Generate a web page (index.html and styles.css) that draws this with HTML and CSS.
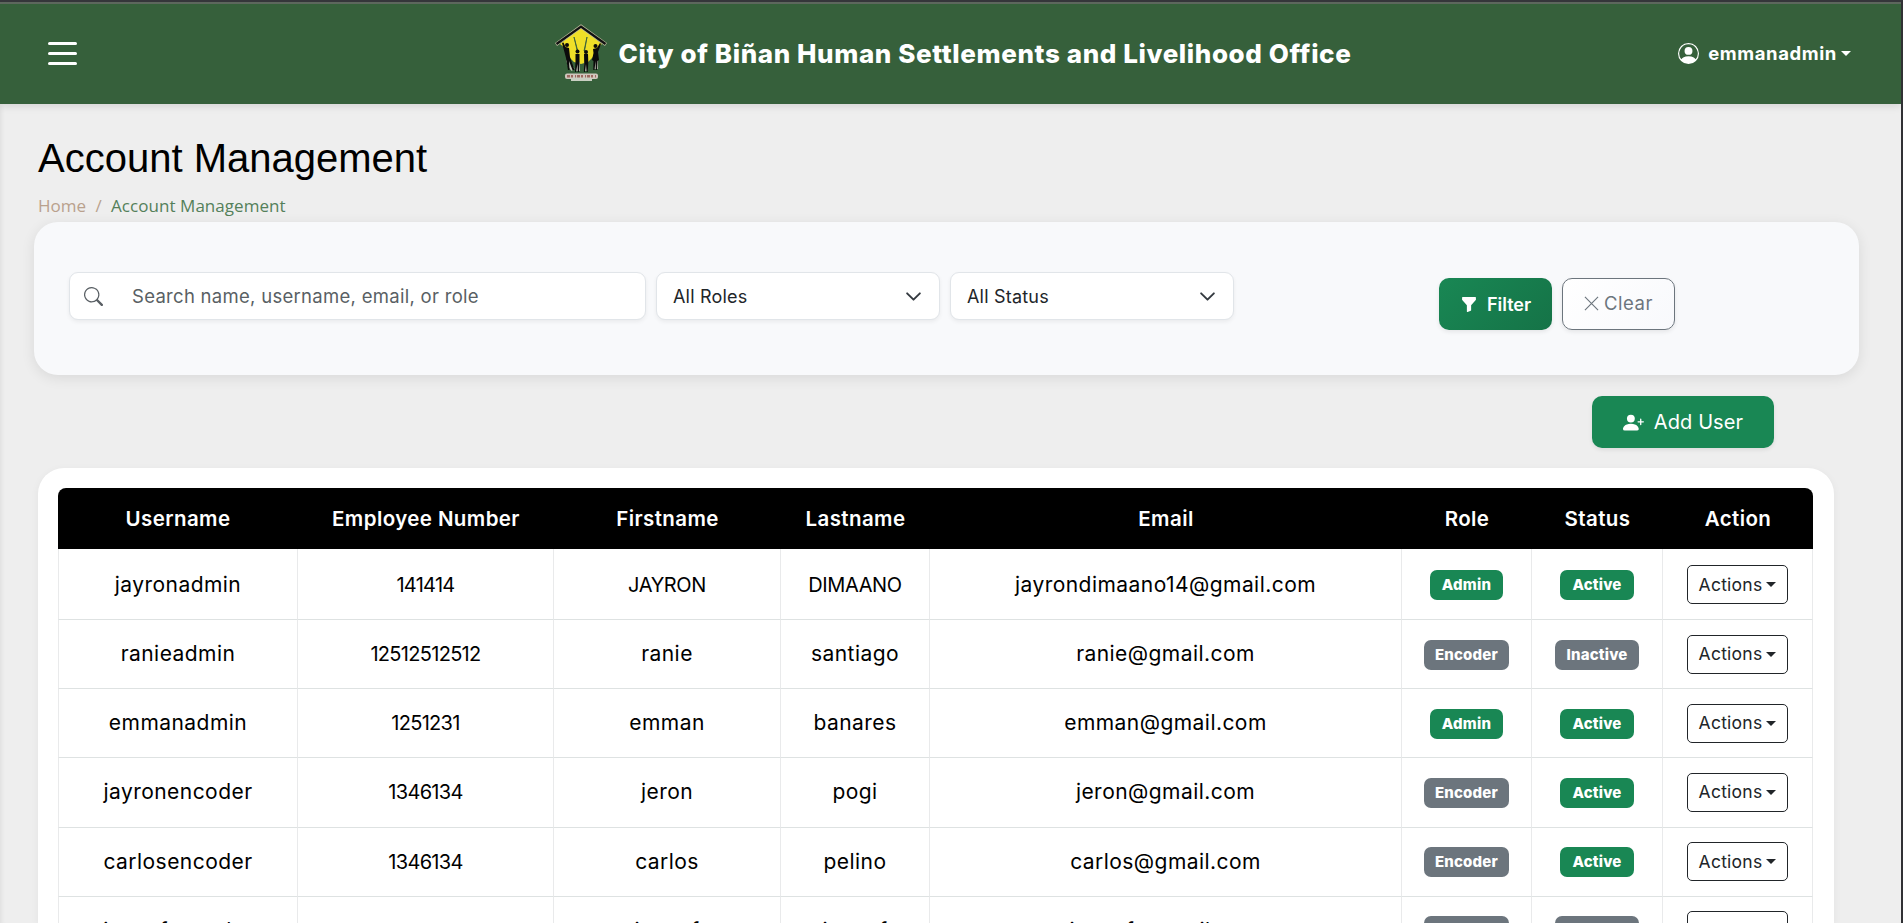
FILE: index.html
```html
<!DOCTYPE html>
<html lang="en">
<head>
<meta charset="utf-8">
<title>Account Management</title>
<link rel="stylesheet" href="styles.css">
</head>
<body>
<header class="topbar">
  <button class="menu" aria-label="Menu"><span></span><span></span><span></span></button>
  <div class="brand">
    <svg class="logo" viewBox="0 0 52 58">
      <path d="M26 3 5 20 10 24 14 33 19 38 26 40 33 38 38 33 42 24 47 20Z" fill="#efdf28"/>
      <path d="M19 13 22 26 22.500 26ZM32 13 29 27 29.500 27Z" fill="#36603b" stroke="#36603b" stroke-width=".8"/>
      <path d="M1 20.500 26 2.500 51 20.500" fill="none" stroke="#b9b79a" stroke-width="3.600"/>
      <path d="M1.500 20 26 2.500 50.500 20" fill="none" stroke="#111" stroke-width="2.200"/>
      <g fill="none" stroke="#c3c7b8" stroke-width="3.800" stroke-linejoin="round">
        <path d="M13 36 14.500 41 18 46M23 38V47M31 38V47M41 36V45"/>
      </g>
      <g fill="#0b0b0b">
        <path d="M7 19 8.500 18.500 10.500 23 14 24 15 33 19.500 46 17.500 46 14 37 14.500 46 13 46 11 34Z"/>
        <path d="M20.500 30 24.500 30 24.500 38 24 48 22.800 48 22.500 40 21 48 20 48 20.500 38Z"/>
        <path d="M29 30 33 30 33.300 38 32.800 48 31.600 48 31 40 30 48 28.900 48 29.200 38Z"/>
        <path d="M38 25 42 24 45 19 46 20 43 28 44 36 42.500 37 42 46 40.800 46 40.500 37 39.500 46 38.300 46 38.500 37 37 36 38.500 29Z"/>
        <circle cx="12" cy="21" r="2"/><circle cx="22.500" cy="27.500" r="2"/><circle cx="31" cy="28" r="2"/><circle cx="40.500" cy="22" r="2"/>
      </g>
      <rect x="10" y="49.500" width="33" height="5.500" rx="2" fill="#cfc6bd"/><rect x="16" y="53.500" width="21" height="3.500" fill="#c9cfc2"/>
      <path d="M12 52.300H41" stroke="#9b6a60" stroke-width="2.600" stroke-dasharray="3 1 2 2 1 1"/>
    </svg>
    <span class="brand-name">City of Biñan Human Settlements and Livelihood Office</span>
  </div>
  <div class="user">
    <svg class="user-icon" viewBox="0 0 16 16" fill="currentColor"><path d="M11 6a3 3 0 1 1-6 0 3 3 0 0 1 6 0"/><path fill-rule="evenodd" d="M0 8a8 8 0 1 1 16 0A8 8 0 0 1 0 8m8-7a7 7 0 0 0-5.468 11.370C3.242 11.226 4.805 10 8 10s4.757 1.225 5.468 2.370A7 7 0 0 0 8 1"/></svg>
    <span class="user-name">emmanadmin</span><i class="caret"></i>
  </div>
</header>
<main class="page">
  <h1>Account Management</h1>
  <nav class="crumbs"><a>Home</a><span class="sep">/</span><span class="current">Account Management</span></nav>
  <section class="filters">
    <div class="search">
      <svg viewBox="0 0 16 16" fill="currentColor"><path d="M11.742 10.344a6.500 6.500 0 1 0-1.397 1.398h-.001q.044.060.098.115l3.850 3.850a1 1 0 0 0 1.415-1.414l-3.850-3.850a1 1 0 0 0-.115-.1zM12 6.500a5.500 5.500 0 1 1-11 0 5.500 5.500 0 0 1 11 0"/></svg>
      <span>Search name, username, email, or role</span>
    </div>
    <div class="select"><span>All Roles</span><svg viewBox="0 0 16 16"><path d="m2 5 6 6 6-6"/></svg></div>
    <div class="select"><span>All Status</span><svg viewBox="0 0 16 16"><path d="m2 5 6 6 6-6"/></svg></div>
    <div class="buttons">
      <button class="btn filter"><svg viewBox="0 0 16 16" fill="currentColor"><path d="M1.500 1.500A.5.500 0 0 1 2 1h12a.5.500 0 0 1 .5.500v2a.5.500 0 0 1-.128.334L10 8.692V13.500a.5.500 0 0 1-.342.474l-3 1A.5.500 0 0 1 6 14.500V8.692L1.628 3.834A.5.500 0 0 1 1.500 3.500z"/></svg><span>Filter</span></button>
      <button class="btn clear"><svg viewBox="0 0 16 16"><path d="M1 1 15 15M15 1 1 15"/></svg><span>Clear</span></button>
    </div>
  </section>
  <div class="add-row">
    <button class="btn add"><svg viewBox="0 0 16 16" fill="currentColor"><path d="M1 14s-1 0-1-1 1-4 6-4 6 3 6 4-1 1-1 1zm5-6a3 3 0 1 0 0-6 3 3 0 0 0 0 6"/><path fill-rule="evenodd" d="M13.500 5a.5.500 0 0 1 .5.500V7h1.500a.5.500 0 0 1 0 1H14v1.500a.5.500 0 0 1-1 0V8h-1.500a.5.500 0 0 1 0-1H13V5.500a.5.500 0 0 1 .5-.5"/></svg><span>Add User</span></button>
  </div>
  <section class="table-card">
    <table>
      <colgroup><col class="c1"><col class="c2"><col class="c3"><col class="c4"><col class="c5"><col class="c6"><col class="c7"><col class="c8"></colgroup>
      <thead><tr><th>Username</th><th>Employee Number</th><th>Firstname</th><th>Lastname</th><th>Email</th><th>Role</th><th>Status</th><th>Action</th></tr></thead>
      <tbody>
        <tr><td>jayronadmin</td><td class="num">141414</td><td class="caps">JAYRON</td><td class="caps">DIMAANO</td><td>jayrondimaano14@gmail.com</td><td><span class="badge green">Admin</span></td><td><span class="badge green">Active</span></td><td><button class="actions">Actions<i class="caret"></i></button></td></tr>
        <tr><td>ranieadmin</td><td class="num">12512512512</td><td>ranie</td><td>santiago</td><td>ranie@gmail.com</td><td><span class="badge">Encoder</span></td><td><span class="badge">Inactive</span></td><td><button class="actions">Actions<i class="caret"></i></button></td></tr>
        <tr><td>emmanadmin</td><td class="num">1251231</td><td>emman</td><td>banares</td><td>emman@gmail.com</td><td><span class="badge green">Admin</span></td><td><span class="badge green">Active</span></td><td><button class="actions">Actions<i class="caret"></i></button></td></tr>
        <tr><td>jayronencoder</td><td class="num">1346134</td><td>jeron</td><td>pogi</td><td>jeron@gmail.com</td><td><span class="badge">Encoder</span></td><td><span class="badge green">Active</span></td><td><button class="actions">Actions<i class="caret"></i></button></td></tr>
        <tr><td>carlosencoder</td><td class="num">1346134</td><td>carlos</td><td>pelino</td><td>carlos@gmail.com</td><td><span class="badge">Encoder</span></td><td><span class="badge green">Active</span></td><td><button class="actions">Actions<i class="caret"></i></button></td></tr>
        <tr><td>juanofencoder</td><td class="num">341133</td><td>juanof</td><td>juanof</td><td>juanof@gmail.com</td><td><span class="badge">Encoder</span></td><td><span class="badge">Inactive</span></td><td><button class="actions">Actions<i class="caret"></i></button></td></tr>
      </tbody>
    </table>
  </section>
</main>
</body>
</html>
```
FILE: styles.css
```css
* { box-sizing: border-box; }
html { height: 100%; overflow: hidden; }
body {
  margin: 0; height: 923px; overflow: hidden; background: #eee; color: #000;
  font-family: Inter, "Open Sans", sans-serif;
  border-top: 2px solid #35363a; border-right: 2px solid #303134;
}
button { font: inherit; }
svg { display: block; flex: none; }
.topbar {
  position: relative; z-index: 1; height: 102px; padding: 0 50px 2px 48px; color: #fff;
  display: flex; align-items: center; justify-content: space-between;
  background: #36603b; border-top: 2px solid #5d675d;
  box-shadow: 0 2px 8px rgba(0,0,0,.12);
}
.menu { width: 29px; padding: 0; border: 0; background: none; display: grid; gap: 7px; }
.menu span { height: 3px; border-radius: 2px; background: #fff; }
.brand { display: flex; align-items: center; gap: 12px; margin-left: 150px; }
.logo { width: 52px; height: 58px; }
.brand-name { font-size: 26px; font-weight: 800; width: 732px; white-space: nowrap; letter-spacing: .6px; }
.user { display: flex; align-items: center; }
.user-icon { width: 21px; height: 21px; margin-right: 9px; }
.user-name { font-size: 18.5px; font-weight: 700; letter-spacing: .6px; }
.caret { display: inline-block; border: 5px solid transparent; border-top-color: currentColor; border-bottom: 0; margin-left: 4px; }
.page { display: flex; flex-direction: column; overflow: hidden; padding: 30px 40px 0 34px; box-shadow: inset 5px 0 5px -4px rgba(0,0,0,.08); height: 819px; }
h1 { flex: none; margin: 0 0 0 4px; font: 400 40px/48px "Liberation Sans", sans-serif; }
.crumbs { flex: none; margin: 10px 0 2px 4px; height: 28px; display: flex; align-items: center; font: 500 17px/28px "Open Sans", sans-serif; color: #b9a18d; }
.sep { width: 25px; text-align: center; }
.current { color: #54805a; letter-spacing: .05px; }
.filters {
  flex: none; height: 153px; margin-right: 2px; padding: 50px 35px 0; border-radius: 24px; background: #f8f9fb;
  display: flex; gap: 10px; box-shadow: 0 3px 14px rgba(0,0,0,.09);
}
.search, .select { height: 48px; background: #fff; border: 1px solid #e1e5e9; border-radius: 9px; display: flex; align-items: center; box-shadow: 0 2px 4px rgba(0,0,0,.06); }
.search { width: 577px; padding-left: 14px; color: #595f64; font-size: 18.5px; letter-spacing: .29px; }
.search svg { width: 19px; height: 19px; margin-right: 29px; }
.select { width: 284px; padding: 0 17px 0 16px; justify-content: space-between; color: #212529; font-size: 18px; letter-spacing: .2px; }
.select span { padding-top: 1px; }
.select svg { width: 17px; height: 17px; }
.select path { fill: none; stroke: #343a40; stroke-width: 1.800; stroke-linecap: round; stroke-linejoin: round; }
.buttons { margin: 6px 0 0 195px; display: flex; gap: 10px; }
.btn { height: 52px; padding: 0; border: 0; border-radius: 10px; color: #fff; display: flex; align-items: center; justify-content: center; box-shadow: 0 2px 4px rgba(0,0,0,.08); }
.filter { width: 113px; gap: 9px; background: linear-gradient(135deg, #198754, #157347); font-size: 18px; font-weight: 600; }
.filter svg { width: 18px; height: 17px; }
.clear { width: 113px; gap: 5px; padding-bottom: 2px; border: 1px solid #6c757d; background: linear-gradient(135deg, #fff, #f8f9fc); color: #6c757d; font-size: 18.5px; letter-spacing: .5px; }
.clear svg { width: 15px; height: 15px; }
.clear path { stroke: currentColor; stroke-width: 1.2; }
.add-row { flex: none; display: flex; justify-content: flex-end; padding: 21px 87px 20px 0; }
.add { width: 182px; gap: 10px; background: #198754; font-size: 20px; letter-spacing: .1px; }
.add svg { width: 21px; height: 21px; }
.table-card { flex: 1 1 0; min-height: 0; overflow: hidden; margin: 0 27px 0 4px; padding: 20px 20px 0; border-radius: 26px 26px 0 0; background: #fff; box-shadow: 0 2px 8px rgba(0,0,0,.05); }
table { width: 1755px; table-layout: fixed; border-collapse: separate; border-spacing: 0; text-align: center; }
.c1 { width: 240px; } .c2 { width: 256px; } .c3 { width: 227px; } .c4 { width: 149px; }
.c5 { width: 472px; } .c6 { width: 130px; } .c7 { width: 131px; } .c8 { width: 150px; }
th { height: 61px; padding: 0; background: #000; color: #fff; font-size: 20.5px; font-weight: 600; letter-spacing: .4px; }
th:first-child { border-top-left-radius: 8px; }
th:last-child { border-top-right-radius: 8px; }
td { height: 69.2px; padding: 0; border-right: 1px solid #e9eaeb; border-bottom: 1px solid #dee2e2; font-size: 21px; line-height: 30px; letter-spacing: .45px; }
tbody tr:first-child td { height: 71px; padding-top: 1px; }
td:first-child { border-left: 1px solid #e9eaeb; }
td.num { font-size: 20px; letter-spacing: -.7px; }
td.caps { font-size: 20px; letter-spacing: -.4px; }
.badge { display: inline-block; padding: 0 11px; border-radius: 7px; background: #6c757d; color: #fff; font-size: 15px; font-weight: 800; letter-spacing: .2px; line-height: 30px; vertical-align: middle; }
.green { background: #198754; padding: 0 12px; }
.actions { width: 101px; height: 39px; padding: 0; border: 1px solid #212529; border-radius: 5px; background: #fff; color: #212529; font-size: 17.5px; letter-spacing: .25px; display: inline-flex; align-items: center; justify-content: center; vertical-align: middle; }
```
